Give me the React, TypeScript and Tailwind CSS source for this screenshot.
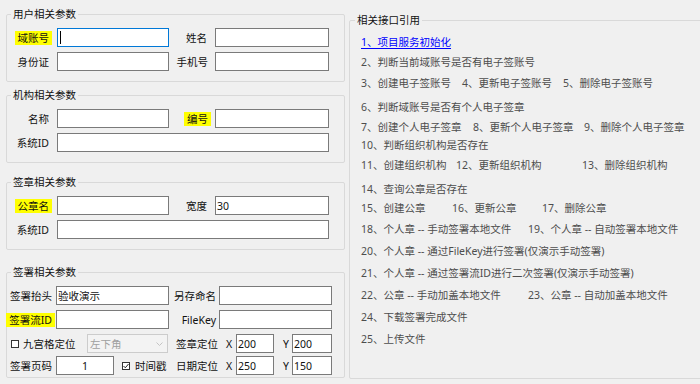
import React from 'react';
import clsx from 'clsx';

/* ------------------------------ petits blocs ------------------------------ */
type FieldProps = { className?: string; value?: string; focused?: boolean; center?: boolean };

const Field = ({ className, value, focused, center }: FieldProps) => (
  <div
    className={clsx(
      'h-[19px] shrink-0 bg-white border flex items-center px-[1px] whitespace-nowrap overflow-hidden',
      focused ? 'border-[#0078d7]' : 'border-[#7a7a7a]',
      center && 'justify-center',
      className
    )}
  >
    {focused && <span className="w-px h-[13px] bg-black ml-px" />}
    {value}
  </div>
);

const Label = ({ text, className, hl }: { text: string; className?: string; hl?: boolean }) => (
  <div className={clsx('shrink-0 flex justify-end', className)}>
    <span className={clsx('px-[3px] whitespace-nowrap', hl && 'bg-[#ffff00]')}>{text}</span>
  </div>
);

const Group = ({
  title,
  className,
  children,
}: {
  title: string;
  className?: string;
  children: React.ReactNode;
}) => (
  <fieldset className={clsx('border border-[#d9d9d9] rounded-[2px]', className)}>
    <legend className="ml-[4px] px-[2px] leading-[14px]">{title}</legend>
    {children}
  </fieldset>
);

const CheckBox = ({ checked }: { checked?: boolean }) => (
  <div className="w-[8px] h-[8px] shrink-0 border border-[#333] bg-white flex items-center justify-center">
    {checked && (
      <svg width="6" height="6" viewBox="0 0 6 6">
        <polyline points="0.5,3 2.3,4.8 5.5,1" fill="none" stroke="#222" strokeWidth="1" />
      </svg>
    )}
  </div>
);

/* ------------------------------ liste droite ------------------------------ */
type Item = { t: string; w?: string };
const LINES: { mt: string; items: Item[] }[] = [
  { mt: 'mt-[6px]', items: [{ t: '2、判断当前域账号是否有电子签账号' }] },
  {
    mt: 'mt-[7px]',
    items: [
      { t: '3、创建电子签账号', w: 'w-[101px]' },
      { t: '4、更新电子签账号', w: 'w-[101px]' },
      { t: '5、删除电子签账号' },
    ],
  },
  { mt: 'mt-[10px]', items: [{ t: '6、判断域账号是否有个人电子签章' }] },
  {
    mt: 'mt-[6px]',
    items: [
      { t: '7、创建个人电子签章', w: 'w-[112px]' },
      { t: '8、更新个人电子签章', w: 'w-[111px]' },
      { t: '9、删除个人电子签章' },
    ],
  },
  { mt: 'mt-[4px]', items: [{ t: '10、判断组织机构是否存在' }] },
  {
    mt: 'mt-[6px]',
    items: [
      { t: '11、创建组织机构', w: 'w-[95px]' },
      { t: '12、更新组织机构', w: 'w-[126px]' },
      { t: '13、删除组织机构' },
    ],
  },
  { mt: 'mt-[10px]', items: [{ t: '14、查询公章是否存在' }] },
  {
    mt: 'mt-[5px]',
    items: [
      { t: '15、创建公章', w: 'w-[91px]' },
      { t: '16、更新公章', w: 'w-[90px]' },
      { t: '17、删除公章' },
    ],
  },
  {
    mt: 'mt-[7px]',
    items: [
      { t: '18、个人章 -- 手动签署本地文件', w: 'w-[167px]' },
      { t: '19、个人章 -- 自动签署本地文件' },
    ],
  },
  { mt: 'mt-[8px]', items: [{ t: '20、个人章 -- 通过FileKey进行签署(仅演示手动签署)' }] },
  { mt: 'mt-[8px]', items: [{ t: '21、个人章 -- 通过签署流ID进行二次签署(仅演示手动签署)' }] },
  {
    mt: 'mt-[8px]',
    items: [
      { t: '22、公章 -- 手动加盖本地文件', w: 'w-[167px]' },
      { t: '23、公章 -- 自动加盖本地文件' },
    ],
  },
  { mt: 'mt-[8px]', items: [{ t: '24、下载签署完成文件' }] },
  { mt: 'mt-[8px]', items: [{ t: '25、上传文件' }] },
];

export default function App() {
  return (
    <div className="w-[700px] h-[384px] overflow-hidden bg-[#f0f0f0] flex items-start text-[10.5px] leading-[14px] text-[#111] font-['Noto_Sans','Noto_Sans_CJK_SC',sans-serif]">
      {/* colonne gauche */}
      <div className="w-[345px] shrink-0 flex flex-col pl-[6px] pt-[7px]">
        <Group title="用户相关参数" className="w-[339px]">
          <div className="flex items-center pt-[7px]">
            <Label text="域账号" hl className="w-[50px] pr-[5px]" />
            <Field className="w-[112px]" focused />
            <Label text="姓名" className="w-[46px] pr-[5px]" />
            <Field className="w-[114px]" />
          </div>
          <div className="flex items-center mt-[5px] pb-[10px]">
            <Label text="身份证" className="w-[50px] pr-[5px]" />
            <Field className="w-[112px]" />
            <Label text="手机号" className="w-[46px] pr-[4px]" />
            <Field className="w-[114px]" />
          </div>
        </Group>

        <Group title="机构相关参数" className="w-[339px] mt-[6px]">
          <div className="flex items-center pt-[7px]">
            <Label text="名称" className="w-[50px] pr-[5px]" />
            <Field className="w-[112px]" />
            <Label text="编号" hl className="w-[46px] pr-[4px]" />
            <Field className="w-[114px]" />
          </div>
          <div className="flex items-center mt-[5px] pb-[10px]">
            <Label text="系统ID" className="w-[50px] pr-[5px]" />
            <Field className="w-[272px]" />
          </div>
        </Group>

        <Group title="签章相关参数" className="w-[339px] mt-[12px]">
          <div className="flex items-center pt-[7px]">
            <Label text="公章名" hl className="w-[50px] pr-[5px]" />
            <Field className="w-[112px]" />
            <Label text="宽度" className="w-[46px] pr-[5px]" />
            <Field className="w-[114px]" value="30" />
          </div>
          <div className="flex items-center mt-[5px] pb-[10px]">
            <Label text="系统ID" className="w-[50px] pr-[5px]" />
            <Field className="w-[272px]" />
          </div>
        </Group>

        <Group title="签署相关参数" className="w-[339px] mt-[15px]">
          <div className="flex items-center pt-[7px]">
            <Label text="签署抬头" className="w-[49px] pr-[1px]" />
            <Field className="w-[113px]" value="验收演示" />
            <Label text="另存命名" className="w-[50px]" />
            <Field className="w-[113px]" />
          </div>
          <div className="flex items-center mt-[5px]">
            <Label text="签署流ID" hl className="w-[49px] pr-[1px]" />
            <Field className="w-[113px]" />
            <Label text="FileKey" className="w-[50px]" />
            <Field className="w-[113px]" />
          </div>
          <div className="flex items-center mt-[5px]">
            <div className="w-[80px] shrink-0 flex items-center pl-[4px]">
              <CheckBox />
              <span className="ml-[4px] whitespace-nowrap">九宫格定位</span>
            </div>
            <div className="w-[81px] h-[19px] shrink-0 border border-[#cccccc] bg-[#f3f3f3] flex items-center justify-between pl-[2px] pr-[4px] text-[#a0a0a0]">
              <span>左下角</span>
              <svg width="7" height="4" viewBox="0 0 7 4">
                <polyline points="0.5,0.5 3.5,3.5 6.5,0.5" fill="none" stroke="#c4c4c4" strokeWidth="1" />
              </svg>
            </div>
            <Label text="签章定位" className="w-[58px] pr-[5px]" />
            <span className="w-[10px] shrink-0">X</span>
            <Field className="w-[38px]" value="200" />
            <div className="w-[18px] shrink-0 flex justify-end pr-[3px]">Y</div>
            <Field className="w-[40px]" value="200" />
          </div>
          <div className="flex items-center mt-[3px] pb-[2px]">
            <Label text="签署页码" className="w-[49px] pr-[1px]" />
            <Field className="w-[58px]" value="1" center />
            <div className="w-[54px] shrink-0 flex items-center pl-[8px]">
              <CheckBox checked />
              <span className="ml-[5px] whitespace-nowrap">时间戳</span>
            </div>
            <Label text="日期定位" className="w-[58px] pr-[5px]" />
            <span className="w-[10px] shrink-0">X</span>
            <Field className="w-[38px]" value="250" />
            <div className="w-[18px] shrink-0 flex justify-end pr-[3px]">Y</div>
            <Field className="w-[40px]" value="150" />
          </div>
        </Group>
      </div>

      {/* colonne droite */}
      <fieldset className="ml-[4px] mt-[13px] w-[360px] h-[366px] shrink-0 border border-[#d9d9d9] rounded-[2px]">
        <legend className="ml-[5px] px-[2px] leading-[14px]">相关接口引用</legend>
        <div className="pl-[11px] flex flex-col text-[#4d4d4d]">
          <div className="mt-[8px] text-[#0000ff] underline underline-offset-[2px] whitespace-nowrap">
            1、项目服务初始化
          </div>
          {LINES.map((l, i) => (
            <div key={i} className={clsx('flex whitespace-nowrap', l.mt)}>
              {l.items.map((it) => (
                <span key={it.t} className={clsx('shrink-0', it.w)}>
                  {it.t}
                </span>
              ))}
            </div>
          ))}
        </div>
      </fieldset>
    </div>
  );
}
